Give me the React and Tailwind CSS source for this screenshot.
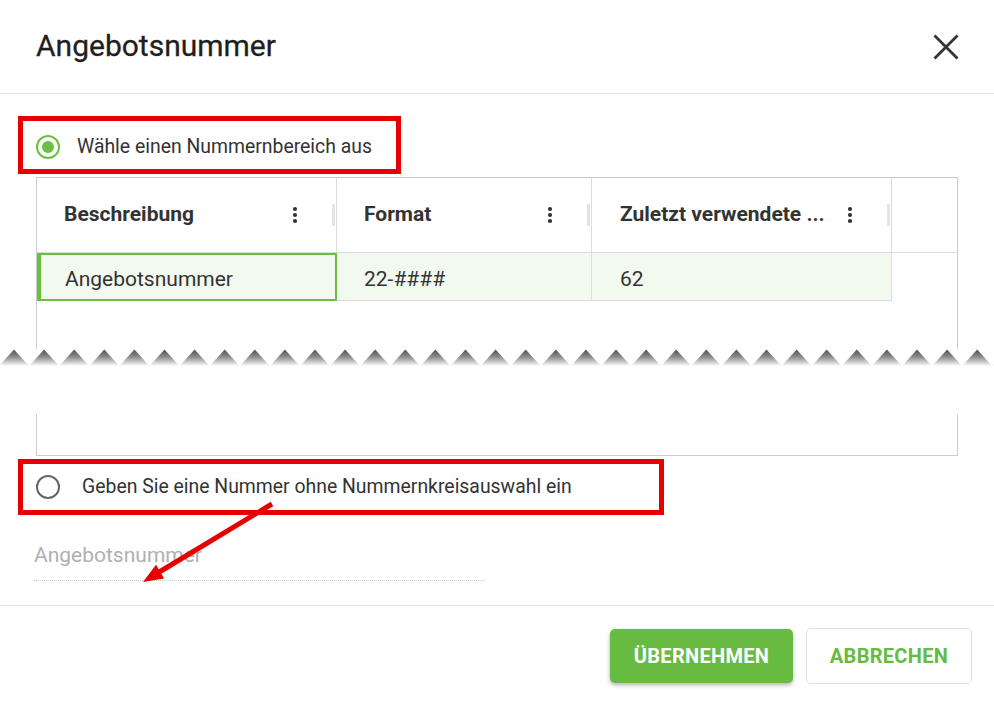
import React from "react";

function Kebab() {
  return (
    <svg width="6" height="18" viewBox="0 0 6 18" className="shrink-0">
      <circle cx="3" cy="3" r="2.1" fill="#333" />
      <circle cx="3" cy="9" r="2.1" fill="#333" />
      <circle cx="3" cy="15" r="2.1" fill="#333" />
    </svg>
  );
}

function HeaderCell({ label, widthClass, plClass }) {
  return (
    <div className={`${widthClass} ${plClass} h-full flex items-center border-r border-[#dddddd]`}>
      <span className="flex-1 text-[21px] font-bold text-[#333] whitespace-nowrap">{label}</span>
      <Kebab />
      <div className="ml-[34px] mr-[1px] w-[3px] h-[22px] bg-[#e3e3e3]" />
    </div>
  );
}

function Radio({ checked }) {
  return checked ? (
    <div className="w-[24px] h-[24px] rounded-full border-[2.5px] border-[#6cbf45] flex items-center justify-center shrink-0">
      <div className="w-[12px] h-[12px] rounded-full bg-[#6cbf45]" />
    </div>
  ) : (
    <div className="w-[24px] h-[24px] rounded-full border-[2.5px] border-[#666666] shrink-0" />
  );
}

export default function App() {
  const peaks = Array.from({ length: 34 }, (_, i) => 14 + i * 30.1);
  return (
    <div className="relative w-[994px] h-[706px] bg-white overflow-hidden font-['Roboto',sans-serif] text-[#333]">
      {/* Header */}
      <div className="h-[94px] border-b border-[#e3e3e3] flex items-center justify-between pl-[36px] pr-[35px]">
        <h1 className="text-[30px] text-[#1f1f1f] leading-none -mt-[2px] [-webkit-text-stroke:0.3px_#1f1f1f]">Angebotsnummer</h1>
        <svg width="26" height="26" viewBox="0 0 26 26">
          <path d="M1.5 1.5L24.5 24.5M24.5 1.5L1.5 24.5" stroke="#333" strokeWidth="2.8" />
        </svg>
      </div>

      {/* Option 1 */}
      <div className="ml-[18px] mt-[22px] w-[383px] h-[58px] border-[5px] border-[#e60000] flex items-center pl-[13px] pt-[3px] gap-[17px]">
        <Radio checked />
        <span className="text-[19.4px] text-[#333] whitespace-nowrap">Wähle einen Nummernbereich aus</span>
      </div>

      {/* Table top part */}
      <div className="ml-[36px] mt-[3px] w-[922px] h-[172px] border-t border-x border-[#cccccc]">
        <div className="flex h-[75px] border-b border-[#dcdcdc]">
          <HeaderCell label="Beschreibung" widthClass="w-[300px]" plClass="pl-[27px]" />
          <HeaderCell label="Format" widthClass="w-[255px]" plClass="pl-[27px]" />
          <HeaderCell label="Zuletzt verwendete ..." widthClass="w-[300px]" plClass="pl-[28px]" />
          <div className="flex-1" />
        </div>
        <div className="flex h-[48px]">
          <div className="w-[300px] h-full bg-[#f2f9ee] border-2 border-l-[4px] border-[#6cbf45] pl-[24px] pt-[6px] flex items-center">
            <span className="text-[21px] text-[#333]">Angebotsnummer</span>
          </div>
          <div className="w-[255px] h-full bg-[#f2f9ee] border-r border-b border-[#dcdcdc] pl-[27px] pt-[6px] flex items-center">
            <span className="text-[21px] text-[#333]">22-####</span>
          </div>
          <div className="w-[300px] h-full bg-[#f2f9ee] border-r border-b border-[#dcdcdc] pl-[28px] pt-[6px] flex items-center">
            <span className="text-[21px] text-[#333]">62</span>
          </div>
          <div className="flex-1" />
        </div>
      </div>

      {/* Torn edge */}
      <div className="h-[65px] w-full">
        <svg width="994" height="22" viewBox="0 0 994 22" className="block">
          <defs>
            <linearGradient id="tear" x1="0" y1="0" x2="0" y2="1">
              <stop offset="0" stopColor="#4f4f4f" />
              <stop offset="0.45" stopColor="#8c8c8c" />
              <stop offset="0.8" stopColor="#d4d4d4" />
              <stop offset="1" stopColor="#ffffff" />
            </linearGradient>
            <filter id="soft" x="-10%" y="-20%" width="120%" height="140%">
              <feGaussianBlur stdDeviation="0.7" />
            </filter>
          </defs>
          <g filter="url(#soft)">
            {peaks.map((p, i) => (
              <polygon
                key={i}
                points={`${p - 15},17 ${p},0.5 ${p + 15},17`}
                fill="url(#tear)"
              />
            ))}
          </g>
        </svg>
      </div>

      {/* Table bottom part */}
      <div className="ml-[36px] w-[922px] h-[42px] border-x border-b border-[#cccccc]" />

      {/* Option 2 */}
      <div className="ml-[18px] mt-[3px] w-[646px] h-[56px] border-[5px] border-[#e60000] flex items-center pl-[13px] gap-[22px]">
        <Radio />
        <span className="text-[19.4px] text-[#333] whitespace-nowrap">Geben Sie eine Nummer ohne Nummernkreisauswahl ein</span>
      </div>

      {/* Input */}
      <div className="ml-[34px] mt-[24px] w-[451px] h-[42px] border-b border-dotted border-[#cfcfcf] pt-[2px]">
        <span className="block leading-[28px] text-[21px] font-normal text-[#b0b0b0]">Angebotsnummer</span>
      </div>

      {/* Footer */}
      <div className="mt-[24px] border-t border-[#e3e3e3] flex justify-end items-center gap-[13px] pr-[22px] pt-[22px]">
        <button className="w-[183px] h-[54px] bg-[#66bb40] rounded-[5px] shadow-[0_2px_4px_rgba(0,0,0,0.3)] text-white font-bold text-[20px] tracking-[0.3px]">
          ÜBERNEHMEN
        </button>
        <button className="w-[166px] h-[56px] bg-white border border-[#e0e0e0] rounded-[5px] text-[#66bb40] font-bold text-[20px] tracking-[0.3px]">
          ABBRECHEN
        </button>
      </div>

      {/* Annotation arrow */}
      <svg className="absolute left-0 top-0 pointer-events-none" width="994" height="706" viewBox="0 0 994 706">
        <line x1="272" y1="504" x2="156" y2="574" stroke="#e60000" strokeWidth="5" />
        <polygon points="143,582 156,564.8 164.2,578.4" fill="#e60000" />
      </svg>
    </div>
  );
}
